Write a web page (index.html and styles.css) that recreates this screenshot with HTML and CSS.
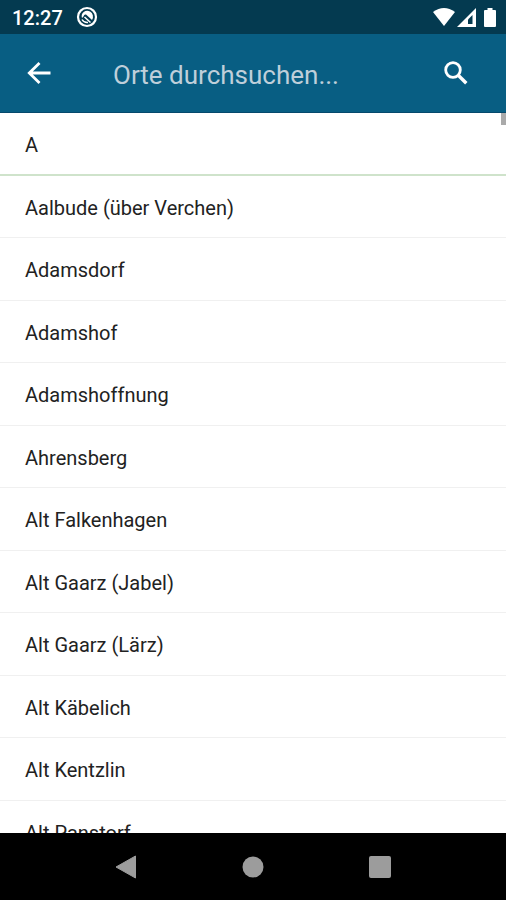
FILE: index.html
```html
<!DOCTYPE html>
<html lang="de">
<head>
<meta charset="utf-8">
<meta name="viewport" content="width=device-width, initial-scale=1">
<title>Orte</title>
<link rel="stylesheet" href="styles.css">
</head>
<body>
<div class="screen">
  <div class="status">
    <span class="clock">12:27</span>
    <svg class="status-app" width="22" height="22" viewBox="0 0 22 22" aria-hidden="true">
      <circle cx="11" cy="11" r="9" fill="none" stroke="#fff" stroke-width="2.200"/>
      <path d="M6 12A5.500 5.500 0 0 1 14 5.500A6 6 0 0 1 16 14L10 8.500Q8 8 7.500 10.500Z" fill="#fff"/>
      <path d="M8.500 11l6 5.500M6 13.500q2 3.500 6 3" fill="none" stroke="#fff" stroke-width="1.500"/>
      <path d="M9.500 9.500l6 5.500" stroke="#043a50" stroke-width="1"/>
    </svg>
    <div class="status-icons">
      <svg width="22" height="18" viewBox="0 0 22 18" aria-hidden="true"><path d="M0 4Q11-4 22 4L11 18Z" fill="#fff"/></svg>
      <svg width="19" height="19" viewBox="0 0 19 19" aria-hidden="true"><path d="M0 19L19 0V19Z" fill="#fff"/><path d="M11 11.500L15.500 7V16H11Z" fill="#043a50"/></svg>
      <svg class="battery" width="12" height="19" viewBox="0 0 12 19" aria-hidden="true"><path d="M3.500 0H8.500V2H11Q12 2 12 3V18Q12 19 11 19H1Q0 19 0 18V3Q0 2 1 2H3.500Z" fill="#fff"/></svg>
    </div>
  </div>
  <header class="appbar">
    <button class="icon-button" type="button" aria-label="Zurück">
      <svg width="24" height="22" viewBox="0 0 24 22" fill="none" stroke="#fff" stroke-width="2.800" aria-hidden="true"><path d="M23.500 11H2.500M12.500 1L2.300 11L12.500 21"/></svg>
    </button>
    <input class="search" type="text" placeholder="Orte durchsuchen..." aria-label="Orte durchsuchen">
    <button class="icon-button" type="button" aria-label="Suchen">
      <svg width="24" height="24" viewBox="0 0 24 24" fill="none" stroke="#fff" aria-hidden="true"><circle cx="9" cy="9" r="7.300" stroke-width="2.800"/><path d="M14 14L22.300 22.300" stroke-width="3.400"/></svg>
    </button>
  </header>
  <main class="content">
    <div class="scroll-thumb"></div>
    <ul class="places">
      <li class="letter">A</li>
      <li>Aalbude (über Verchen)</li>
      <li>Adamsdorf</li>
      <li>Adamshof</li>
      <li>Adamshoffnung</li>
      <li>Ahrensberg</li>
      <li>Alt Falkenhagen</li>
      <li>Alt Gaarz (Jabel)</li>
      <li>Alt Gaarz (Lärz)</li>
      <li>Alt Käbelich</li>
      <li>Alt Kentzlin</li>
      <li>Alt Panstorf</li>
    </ul>
  </main>
  <nav class="navbar" aria-label="System">
    <button type="button" aria-label="Zurück"><svg width="22" height="24" viewBox="0 0 22 24" aria-hidden="true"><path d="M1 12L20.500 1V23Z" fill="#9c9c9c" stroke="#9c9c9c" stroke-linejoin="round"/></svg></button>
    <button type="button" aria-label="Startseite"><svg width="22" height="22" viewBox="0 0 22 22" aria-hidden="true"><circle cx="11" cy="11" r="10.500" fill="#9c9c9c"/></svg></button>
    <button type="button" aria-label="Übersicht"><svg width="22" height="22" viewBox="0 0 22 22" aria-hidden="true"><rect width="22" height="22" rx="2" fill="#9c9c9c"/></svg></button>
  </nav>
</div>
</body>
</html>
```
FILE: styles.css
```css
* {
  box-sizing: border-box;
}

body {
  margin: 0;
  font-family: Roboto, "Liberation Sans", sans-serif;
  color: #222;
  background: #fff;
}

button {
  display: grid;
  place-items: center;
  padding: 0;
  border: 0;
  background: none;
}

svg {
  display: block;
}

.screen {
  display: flex;
  flex-direction: column;
  height: 100vh;
}

.status {
  display: flex;
  align-items: center;
  flex: none;
  height: 34px;
  padding: 0 10px 0 12px;
  color: #fff;
  background: #043a50;
}

.clock {
  padding-top: 2px;
  font-size: 20px;
  font-weight: 500;
  line-height: 32px;
}

.status-app {
  margin-left: 13px;
}

.status-icons {
  display: flex;
  align-items: center;
  gap: 2px;
  margin-left: auto;
}

.battery {
  margin-left: 6px;
}

.appbar {
  display: flex;
  align-items: center;
  flex: none;
  height: 79px;
  padding: 0 25px 0 14px;
  background: #085e83;
  border-bottom: 1px solid #06496c;
}

.icon-button {
  flex: none;
  width: 50px;
  height: 50px;
}

.search {
  flex: 1;
  min-width: 0;
  margin-left: 49px;
  padding: 4px 0 0;
  border: 0;
  outline: 0;
  background: none;
  color: #fff;
  font: 400 26px/32px Roboto, "Liberation Sans", sans-serif;
}

.search::placeholder {
  color: #bfcfda;
  opacity: 1;
}

.content {
  position: relative;
  flex: 1;
  min-height: 0;
  overflow: hidden;
}

.scroll-thumb {
  position: absolute;
  top: 0;
  right: 0;
  width: 5px;
  height: 12px;
  background: #aaa;
}

.places {
  margin: 0;
  padding: 0;
  list-style: none;
}

.places li {
  display: flex;
  align-items: center;
  height: 62px;
  padding: 2px 25px 0;
  border-bottom: 1px solid #f0f0f0;
  font-size: 20px;
  line-height: 24px;
}

.places li:nth-child(odd) {
  height: 63px;
}

.places .letter {
  border-bottom: 2px solid #cfe3cb;
}

.navbar {
  display: grid;
  grid-template-columns: repeat(3, 1fr);
  flex: none;
  height: 67px;
  padding: 0 62px;
  background: #000;
}
```
